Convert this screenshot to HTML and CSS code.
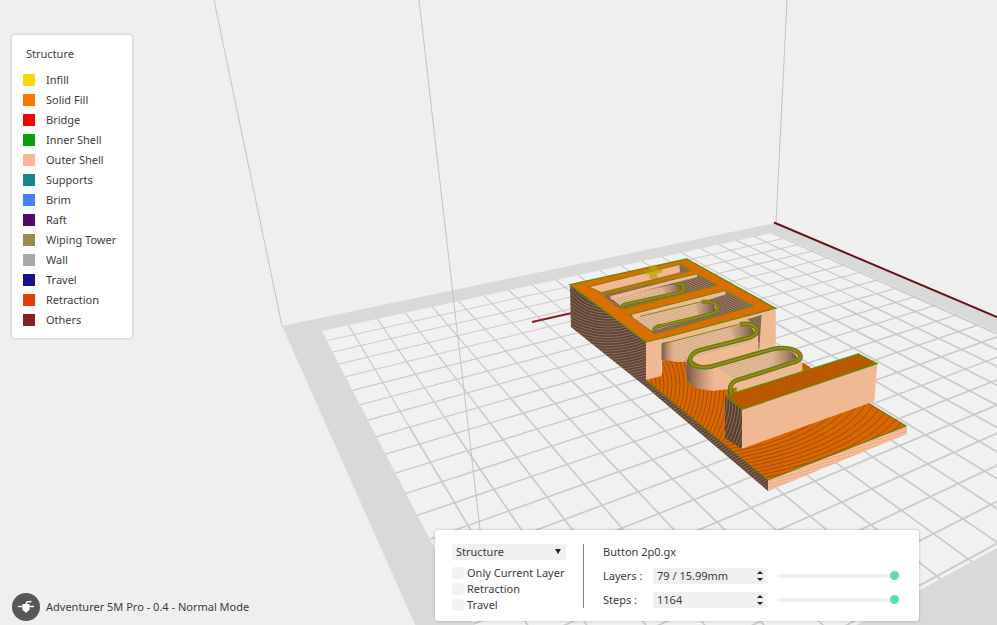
FILE: index.html
```html
<!DOCTYPE html>
<html lang="en">
<head>
<meta charset="utf-8">
<title>Adventurer 5M Pro - Preview</title>
<link rel="stylesheet" href="styles.css">
</head>
<body>
<main class="viewport">
<svg class="scene" viewBox="0 0 997 625" preserveAspectRatio="xMidYMid slice" aria-hidden="true">
  <defs>
    <pattern id="peach" width="3" height="3" patternUnits="userSpaceOnUse" patternTransform="rotate(-15)">
      <rect width="3" height="3" fill="#f6bf9a"/><rect width="3" height="1" fill="#e6ab84"/>
    </pattern>
    <pattern id="tan" width="6" height="6" patternUnits="userSpaceOnUse" patternTransform="rotate(-15)">
      <rect width="6" height="6" fill="#e9bf9c"/><rect width="6" height="3" fill="#d5a985"/>
    </pattern>
    <pattern id="mesh" width="6" height="6" patternUnits="userSpaceOnUse" patternTransform="rotate(28)">
      <rect width="6" height="6" fill="#a58069"/><rect width="6" height="3" fill="#6d5141"/>
    </pattern>
    <pattern id="solid" width="6" height="6" patternUnits="userSpaceOnUse" patternTransform="rotate(32)">
      <rect width="6" height="6" fill="#e37400"/><rect width="6" height="2" fill="#cb6400"/>
    </pattern>
    <pattern id="infillTop" width="7" height="7" patternUnits="userSpaceOnUse" patternTransform="rotate(38)">
      <rect width="7" height="7" fill="#cc6200"/><rect width="7" height="3" fill="#a44a00"/>
    </pattern>
    <linearGradient id="curveShade">
      <stop offset="0" stop-color="#5f4435" stop-opacity=".85"/><stop offset="1" stop-color="#8a6850" stop-opacity="0"/>
    </linearGradient>
    <linearGradient id="curveShadeEnd">
      <stop offset="0" stop-color="#8a6850" stop-opacity="0"/><stop offset="1" stop-color="#5f4435" stop-opacity=".85"/>
    </linearGradient>
    <clipPath id="sideClip"><path d="M570 285L647 342L646 380L768 480V491L646 387L571 327Z"/></clipPath>
    <clipPath id="baseLeftClip"><path d="M645 380L662 374V342L740 350L726 396V446Z"/></clipPath>
    <clipPath id="baseFrontClip"><path d="M725 438L742 449L868 403L907 426L768 480L725 446Z"/></clipPath>
    <clipPath id="barClip"><path d="M725 396L742 409V449L725 438Z"/></clipPath>
  </defs>

  <path class="bed-frame" d="M282 326L775 223L1278 435L560 950Z"/>
  <path class="bed-top" d="M321.7 331L773.3 232.7L1214 429L558.9 788Z"/>
  <g id="grid" class="grid"></g>
  <path class="bed-edge" d="M214 0L282 326M419 0L480 529L489 607M787 0L776 223"/>
  <path class="axis" d="M774 222.500L997 317"/>
  <path class="axis axis-short" d="M532 322L572 313"/>

  <path fill="#5d4437" d="M570 285L647 342L646 380L768 480V491L646 387L571 327Z"/>
  <g id="sideRings" class="rings side-rings" clip-path="url(#sideClip)"></g>
  <path fill="#d76700" d="M645 380L662 374V342L803 363L907 426L768 480Z"/>
  <g id="baseLeftRings" class="rings base-rings" clip-path="url(#baseLeftClip)"></g>
  <g id="baseFrontRings" class="rings base-rings" clip-path="url(#baseFrontClip)"></g>
  <path fill="url(#peach)" d="M768 480L907 426V434L768 491Z"/>
  <path class="rim" d="M646 380L768 480L906 426L868 403"/>

  <g transform="translate(640 310) scale(.33333)">
    <path fill="url(#peach)" d="M64 80L360 0L406 0V102L362 120L310 150L125 155L64 150Z"/>
    <path fill="url(#mesh)" d="M322 28L366 14L362 112L354 118V55Z"/>
    <path fill="url(#tan)" d="M100 96L300 45Q350 42 345 70L330 110L125 155H100Z"/>
    <path fill="url(#curveShade)" d="M64 100Q80 90 104 98V155L64 150Z"/>
    <path fill="url(#curveShadeEnd)" d="M265 52L300 46Q345 44 342 74L290 90Z"/>
    <path class="thin-rim" d="M78 99L300 42"/>
  </g>

  <g transform="translate(520 240) scale(.33333)">
    <path fill="url(#solid)" d="M150 134L500 57L767 205L380 307Z"/>
    <path fill="url(#mesh)" d="M480 73L512 92L470 101Z"/>
    <path fill="url(#peach)" d="M210 141L478 74L480 97L245 156Z"/>
    <path class="thin-rim" d="M205 140L485 72L514 93L243 159Z"/>
    <path fill="url(#mesh)" d="M247 166L530 102L592 136L300 208Z"/>
    <path fill="url(#tan)" d="M272 174L455 134Q500 128 492 152L305 200Z"/>
    <path fill="url(#peach)" d="M272 168L530 102L532 111L450 132L272 178Z"/>
    <path fill="url(#curveShadeEnd)" d="M420 138L458 130Q492 128 486 152L440 165Z"/>
    <path class="serp-green slim" d="M470 132C499 128 502 152 468 160L325 191Q305 194 304 204"/>
    <path class="serp-orange slim" d="M470 132C499 128 502 152 468 160L325 191Q305 194 304 204"/>
    <path class="thin-rim" d="M245 163L530 102L592 136L310 208"/>
    <path fill="url(#mesh)" d="M330 224L615 152L702 198L405 282Z"/>
    <path fill="url(#tan)" d="M335 231L545 182Q600 190 592 219L395 272Z"/>
    <path fill="url(#peach)" d="M335 224L615 152L618 163L562 181L345 236Z"/>
    <path fill="url(#curveShadeEnd)" d="M520 192L555 186Q592 188 586 216L540 230Z"/>
    <path class="thin-rim" d="M360 229L545 185"/>
    <path class="serp-green slim" d="M545 185C601 181 614 213 567 223L425 257Q402 260 401 271"/>
    <path class="serp-orange slim" d="M545 185C601 181 614 213 567 223L425 257Q402 260 401 271"/>
    <path class="thin-rim" d="M325 224L615 152L702 198L405 282Z"/>
    <path class="rim-large" d="M150 134L500 57L767 205L380 307Z"/>
    <path fill="#b5a500" opacity=".7" d="M388 79Q400 72 412 79V115Q400 121 388 115ZM375 92L428 86L426 98L380 104Z"/>
    <path fill="url(#peach)" d="M725 221L767 207V318L718 326Z"/>
    <path fill="url(#peach)" d="M378 308L424 297V408L378 420Z"/>
  </g>

  <g transform="translate(640 310) scale(.33333)">
    <path fill="url(#peach)" d="M140 136C142 180 190 178 220 170L400 115C455 103 488 130 487 150V182L265 238L220 242C170 240 142 225 140 205Z"/>
    <path fill="url(#curveShade)" d="M140 136C142 175 175 182 222 176V242C170 240 142 225 140 205Z"/>
    <path fill="url(#peach)" d="M162 141L340 94L355 95V122L207 169Q164 165 158 146Z"/>
    <path fill="url(#tan)" d="M230 170L397 122Q449 113 470 140L460 165L285 210Z"/>
    <path fill="url(#curveShadeEnd)" d="M395 126Q460 112 472 144L444 157L400 168Z"/>
    <path fill="#6a4b39" d="M264 225V255H290Z"/>
    <path fill="url(#peach)" d="M290 224L485 164V190L290 250Z"/>
    <path class="serp-green" d="M300 43C352 36 372 68 327 83L190 118C133 129 135 182 212 170L395 118C471 101 513 146 453 159L310 205C270 213 265 232 276 252"/>
    <path class="serp-orange" d="M300 43C352 36 372 68 327 83L190 118C133 129 135 182 212 170L395 118C471 101 513 146 453 159L310 205C270 213 265 232 276 252"/>
    <path fill="#c95a00" d="M487 158L512 172L490 179Z"/>
  </g>

  <path fill="#58402f" d="M725 396L742 409V449L725 438Z"/>
  <g id="barRings" class="rings side-rings" clip-path="url(#barClip)"></g>
  <g transform="translate(640 330) scale(.33333)">
    <path fill="url(#peach)" d="M306 238L712 100L703 214L306 356Z"/>
    <path fill="url(#infillTop)" d="M256 198L655 72L711 101L307 238Z"/>
    <path class="rim-large" d="M256 198L655 72L711 101L307 238Z"/>
  </g>
</svg>

<aside class="card legend">
  <h2 class="legend-title">Structure</h2>
  <ul class="legend-list">
    <li><i class="swatch infill"></i>Infill</li>
    <li><i class="swatch solid"></i>Solid Fill</li>
    <li><i class="swatch bridge"></i>Bridge</li>
    <li><i class="swatch inner"></i>Inner Shell</li>
    <li><i class="swatch outer"></i>Outer Shell</li>
    <li><i class="swatch supports"></i>Supports</li>
    <li><i class="swatch brim"></i>Brim</li>
    <li><i class="swatch raft"></i>Raft</li>
    <li><i class="swatch tower"></i>Wiping Tower</li>
    <li><i class="swatch wall"></i>Wall</li>
    <li><i class="swatch travel"></i>Travel</li>
    <li><i class="swatch retraction"></i>Retraction</li>
    <li><i class="swatch others"></i>Others</li>
  </ul>
</aside>

<footer class="printer">
  <svg class="printer-icon" viewBox="0 0 28 28" aria-hidden="true">
    <circle cx="14" cy="14" r="14" fill="#575757"/>
    <path d="M6 13.500H22" stroke="#fff" stroke-width="1.500"/>
    <path d="M10.500 11H17.500V17L15.500 18.500L14 20L12.500 18.500L10.500 17Z" fill="#fff"/>
    <path d="M14 11.500V10.500Q14.500 8.500 17 8.800L19.500 8.500" fill="none" stroke="#fff" stroke-width="1.500"/>
  </svg>
  <span>Adventurer 5M Pro - 0.4 - Normal Mode</span>
</footer>

<section class="card controls">
  <div class="display">
    <div class="select-wrap">
      <select class="mode" aria-label="Color mode"><option>Structure</option></select>
      <svg class="caret" viewBox="0 0 6 5" aria-hidden="true"><path d="M0 0H6L3 5Z"/></svg>
    </div>
    <label class="check"><input type="checkbox">Only Current Layer</label>
    <label class="check"><input type="checkbox">Retraction</label>
    <label class="check"><input type="checkbox">Travel</label>
  </div>
  <div class="playback">
    <div class="file">Button 2p0.gx</div>
    <div class="row">
      <label for="layers">Layers :</label>
      <div class="spin">
        <input id="layers" type="text" value="79 / 15.99mm">
        <div class="steps">
          <button type="button" aria-label="Next layer"><svg viewBox="0 0 6 3"><path d="M0 3L3 0L6 3Z"/></svg></button>
          <button type="button" aria-label="Previous layer"><svg viewBox="0 0 6 3"><path d="M0 0L3 3L6 0Z"/></svg></button>
        </div>
      </div>
      <input class="slider" type="range" min="1" max="79" value="79" aria-label="Layer">
    </div>
    <div class="row">
      <label for="steps">Steps :</label>
      <div class="spin">
        <input id="steps" type="text" value="1164">
        <div class="steps">
          <button type="button" aria-label="Next step"><svg viewBox="0 0 6 3"><path d="M0 3L3 0L6 3Z"/></svg></button>
          <button type="button" aria-label="Previous step"><svg viewBox="0 0 6 3"><path d="M0 0L3 3L6 0Z"/></svg></button>
        </div>
      </div>
      <input class="slider" type="range" min="1" max="1164" value="1164" aria-label="Step">
    </div>
  </div>
</section>
</main>
<script src="scene.js"></script>
</body>
</html>
```

FILE: styles.css
```css
* { box-sizing: border-box; }
body {
  margin: 0;
  background: #efefef;
  color: #3c3c3c;
  font: 11px/16px "Noto Sans", "Open Sans", sans-serif;
}
input, select, button { font: inherit; color: inherit; }

.viewport { position: relative; height: 100vh; overflow: hidden; }
.scene { display: block; width: 100%; height: 100%; }

.bed-frame { fill: #d9d9d9; }
.bed-top { fill: #f1f1f1; }
.grid { fill: none; stroke: #cacaca; }
.bed-edge { fill: none; stroke: #c3c3c3; stroke-width: 1; }
.axis { fill: none; stroke: #651519; stroke-width: 2; }
.axis-short { stroke: #8e1f28; }
.rings { fill: none; }
.side-rings { stroke: #8f6d59; stroke-width: 1; }
.base-rings { stroke: #a94d00; stroke-width: 1; }
.rim { fill: none; stroke: #538006; stroke-width: 1; }
.rim-large { fill: none; stroke: #648b05; stroke-width: 4; }
.thin-rim { fill: none; stroke: #718a12; stroke-width: 3; }
.serp-green { fill: none; stroke: #4b8a0a; stroke-width: 14; }
.serp-green.slim { stroke-width: 11; }
.serp-orange { fill: none; stroke: #b87624; stroke-width: 6; }
.serp-orange.slim { stroke-width: 5; }

.card {
  position: absolute;
  background: #fff;
  border-radius: 3px;
  box-shadow: 0 0 3px rgba(0, 0, 0, .25);
}

.legend { top: 35px; left: 12px; padding: 11px 16px 8px 11px; }
.legend-title { margin: 0 0 8px; padding-left: 3px; font-size: 11px; font-weight: 400; line-height: 16px; }
.legend-list { margin: 0; padding: 0; list-style: none; }
.legend-list li { display: flex; align-items: center; gap: 11px; height: 20px; }
.swatch { width: 12px; height: 12px; }
.infill { background: #fdd60f; }
.solid { background: #f97800; }
.bridge { background: #f60000; }
.inner { background: #0c9f05; }
.outer { background: #fdb795; }
.supports { background: #16888d; }
.brim { background: #467ffd; }
.raft { background: #520668; }
.tower { background: #968d4b; }
.wall { background: #a8a8a8; }
.travel { background: #1b0f8e; }
.retraction { background: #e63b05; }
.others { background: #8b2022; }

.printer { position: absolute; left: 12px; bottom: 4px; display: flex; align-items: center; gap: 6px; }
.printer-icon { width: 28px; height: 28px; }

.controls { right: 78px; bottom: 4px; display: flex; padding: 14px 20px 8px 17px; }
.display { width: 131px; padding-right: 17px; }
.select-wrap { position: relative; margin-bottom: 5px; }
.mode {
  display: block; width: 100%; height: 16px; padding: 0 4px;
  border: 0; border-radius: 2px; background: #f0f0f0; appearance: none;
}
.caret { position: absolute; right: 5px; top: 5px; width: 6px; height: 5px; fill: #222; }
.check { display: flex; align-items: center; gap: 3px; height: 16px; white-space: nowrap; }
.check input { width: 12px; height: 12px; margin: 0; border-radius: 3px; background: #f0f1f3; appearance: none; }
.playback { height: 64px; padding-left: 19px; border-left: 1px solid #858585; }
.file { height: 16px; margin-bottom: 8px; }
.row { display: flex; align-items: center; height: 16px; margin-bottom: 8px; }
.row > label { width: 50px; }
.spin { display: flex; width: 113px; height: 16px; margin-right: 11px; border-radius: 2px; background: #f0f0f0; }
.spin input { flex: 1; min-width: 0; height: 16px; padding: 0 4px; border: 0; background: none; }
.steps { display: flex; flex-direction: column; justify-content: center; gap: 4px; padding-right: 3px; }
.steps button { display: block; width: 6px; height: 3px; padding: 0; border: 0; background: none; }
.steps svg { display: block; width: 6px; height: 3px; fill: #222; }
.slider { width: 122px; height: 9px; margin: 0; background: none; appearance: none; }
.slider::-webkit-slider-runnable-track { height: 4px; border-radius: 2px; background: #f0f0f0; }
.slider::-webkit-slider-thumb {
  width: 9px; height: 9px; margin-top: -3px; border-radius: 50%; background: #55dfb1; appearance: none;
}
```

FILE: scene.js
```js
// Corners of the printable area: left, back, right, front.
const bed = [[321.7, 331], [773.3, 232.7], [1214, 429], [558.9, 788]];
const svgNS = "http://www.w3.org/2000/svg";

function quadMap([a, b, c, d]) {
  const sx = a[0] - b[0] + c[0] - d[0], sy = a[1] - b[1] + c[1] - d[1];
  const x1 = b[0] - c[0], x2 = d[0] - c[0], y1 = b[1] - c[1], y2 = d[1] - c[1];
  const det = x1 * y2 - x2 * y1;
  const g = (sx * y2 - x2 * sy) / det, h = (x1 * sy - sx * y1) / det;
  return (u, v) => {
    const w = g * u + h * v + 1;
    return [
      ((b[0] - a[0] + g * b[0]) * u + (d[0] - a[0] + h * d[0]) * v + a[0]) / w,
      ((b[1] - a[1] + g * b[1]) * u + (d[1] - a[1] + h * d[1]) * v + a[1]) / w
    ];
  };
}

function add(parent, name, attrs) {
  const el = document.createElementNS(svgNS, name);
  for (const key in attrs) el.setAttribute(key, attrs[key]);
  document.getElementById(parent).appendChild(el);
}

const map = quadMap(bed);
const cells = 20;
function gridLine(u1, v1, u2, v2, width) {
  const [xa, ya] = map(u1, v1), [xb, yb] = map(u2, v2);
  add("grid", "path", { d: `M${xa} ${ya}L${xb} ${yb}`, "stroke-width": width });
}
for (let k = 0; k < cells; k++) {
  const t = (k + 0.9) / cells;
  gridLine(0, t, 1, t, 0.9 + t);
  gridLine(t, 0, t, 0.4, 1.2);
  gridLine(t, 0.4, t, 1, 1.7);
}

// Layer moire on the printed surfaces.
function rings(id, cx, cy, step, max, ratio) {
  for (let r = step; r < max; r += step) {
    add(id, "ellipse", { cx, cy, rx: r, ry: r * ratio });
  }
}
rings("sideRings", 608, 270, 3, 300, 0.9);
rings("baseLeftRings", 628, 385, 4, 140, 1.1);
rings("baseFrontRings", 655, 385, 8, 400, 0.4);
rings("barRings", 700, 400, 3, 70, 1.6);
```
